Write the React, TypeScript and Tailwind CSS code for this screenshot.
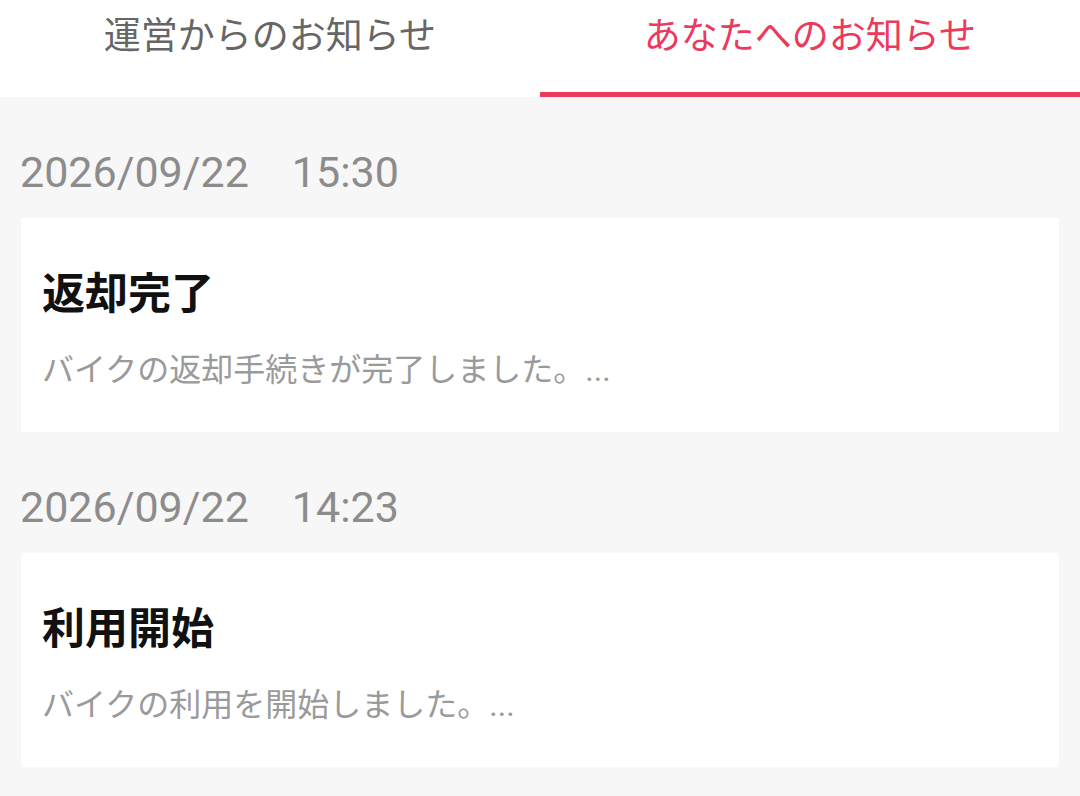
import React, { useState } from "react";

type Notice = {
  date: string;
  time: string;
  title: string;
  body: string;
};

const notices: Notice[] = [
  {
    date: "2026/09/22",
    time: "15:30",
    title: "返却完了",
    body: "バイクの返却手続きが完了しました。...",
  },
  {
    date: "2026/09/22",
    time: "14:23",
    title: "利用開始",
    body: "バイクの利用を開始しました。...",
  },
];

const tabs = ["運営からのお知らせ", "あなたへのお知らせ"];

const App: React.FC = () => {
  const [active, setActive] = useState(1);

  return (
    <div
      className="min-h-[796px] bg-[#f7f7f7]"
      style={{ fontFamily: "Roboto, 'Noto Sans CJK JP', sans-serif" }}
    >
      <div className="flex h-[97px] bg-white">
        {tabs.map((t, i) => (
          <button
            key={t}
            onClick={() => setActive(i)}
            className={
              "relative flex-1 pt-[13px] text-center text-[37px] leading-[48px] self-stretch flex justify-center items-start " +
              (i === active ? "text-[#ec3a5c]" : "text-[#666666]")
            }
          >
            {t}
            {i === active && (
              <span className="absolute bottom-0 left-0 h-[5px] w-full bg-[#ec3a5c]" />
            )}
          </button>
        ))}
      </div>

      {notices.map((n, idx) => (
        <div key={idx}>
          <p className="pl-[20px] pt-[49px] pb-[20px] text-[43px] leading-[52px] text-[#8c8c8c]">
            {n.date}
            {"\u3000"}
            {n.time}
          </p>
          <div className="mx-[21px] bg-white px-[21px] pt-[50px] pb-[42px]">
            <p className="text-[43px] leading-[52px] font-bold text-[#111111]">
              {n.title}
            </p>
            <p className="mt-[30px] text-[32px] leading-[40px] text-[#9a9a9a]">
              {n.body}
            </p>
          </div>
        </div>
      ))}
    </div>
  );
};

export default App;
